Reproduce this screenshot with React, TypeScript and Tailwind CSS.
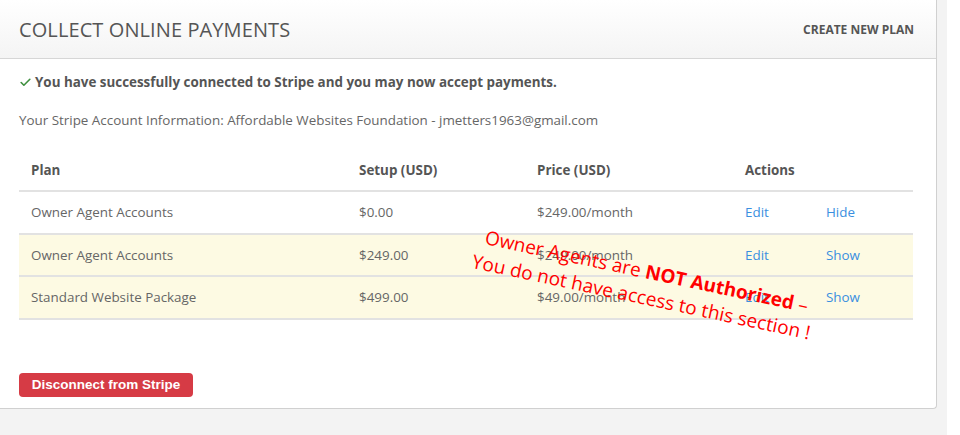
import { Check } from "lucide-react"

const plans = [
  { name: "Owner Agent Accounts", setup: "$0.00", price: "$249.00/month", toggle: "Hide", hidden: false },
  { name: "Owner Agent Accounts", setup: "$249.00", price: "$249.00/month", toggle: "Show", hidden: true },
  { name: "Standard Website Package", setup: "$499.00", price: "$49.00/month", toggle: "Show", hidden: true },
]

export default function App() {
  return (
    <div className="relative flex w-[960px] h-[435px] overflow-hidden bg-white font-['Open_Sans',sans-serif]">
      <div className="w-[947px] h-full bg-[#f3f3f3]">
        <div className="w-[937px] h-[409px] bg-white border-r border-b border-[#d0d0d0] rounded-br-[4px] flex flex-col">
          <div className="h-[59px] flex items-center justify-between pl-[19px] pr-[22px] border-b border-[#d6d6d6] bg-gradient-to-b from-white to-[#f4f4f4]">
            <h1 className="text-[20px] text-[#555] tracking-[0.1px] pt-[1px]">COLLECT ONLINE PAYMENTS</h1>
            <a className="text-[12px] font-bold text-[#555] pt-[1px]">CREATE NEW PLAN</a>
          </div>

          <div className="px-[19px] pr-[22px] text-[13.4px]">
            <p className="mt-[13px] flex items-center gap-[3px] font-bold text-[#555]">
              <Check className="w-[13px] h-[13px] text-[#3f8f3f]" strokeWidth={3} />
              You have successfully connected to Stripe and you may now accept payments.
            </p>
            <p className="mt-[18px] text-[#666]">
              Your Stripe Account Information: Affordable Websites Foundation - jmetters1963@gmail.com
            </p>

            <table className="mt-[20px] w-[894px] text-[#666] border-collapse">
              <thead>
                <tr className="h-[41px] border-b-2 border-[#e2e2e2] text-left text-[#555]">
                  <th className="pl-[12px] w-[340px] font-bold">Plan</th>
                  <th className="w-[178px] font-bold">Setup (USD)</th>
                  <th className="w-[208px] font-bold">Price (USD)</th>
                  <th className="w-[81px] font-bold">Actions</th>
                  <th></th>
                </tr>
              </thead>
              <tbody>
                {plans.map((p, i) => (
                  <tr
                    key={i}
                    className={`h-[42.5px] border-b-2 border-[#e2e2e2] ${p.hidden ? "bg-[#fdfae3]" : "bg-white"}`}
                  >
                    <td className="pl-[12px]">{p.name}</td>
                    <td>{p.setup}</td>
                    <td>{p.price}</td>
                    <td className="text-[#3a8fe0]">Edit</td>
                    <td className="text-[#3a8fe0]">{p.toggle}</td>
                  </tr>
                ))}
              </tbody>
            </table>

            <button className="mt-[53px] h-[24px] w-[174px] rounded-[4px] bg-[#d63b45] text-white text-[13.5px] font-bold font-['Liberation_Sans',sans-serif]">
              Disconnect from Stripe
            </button>
          </div>
        </div>
      </div>

      <div className="absolute left-[644px] top-[284px] -translate-x-1/2 -translate-y-1/2 rotate-[12deg] text-center text-[19px] leading-[26px] text-[#ff0000] whitespace-nowrap">
        <div>
          Owner Agents are <span className="font-bold">NOT Authorized</span> –
        </div>
        <div>You do not have access to this section !</div>
      </div>
    </div>
  )
}
